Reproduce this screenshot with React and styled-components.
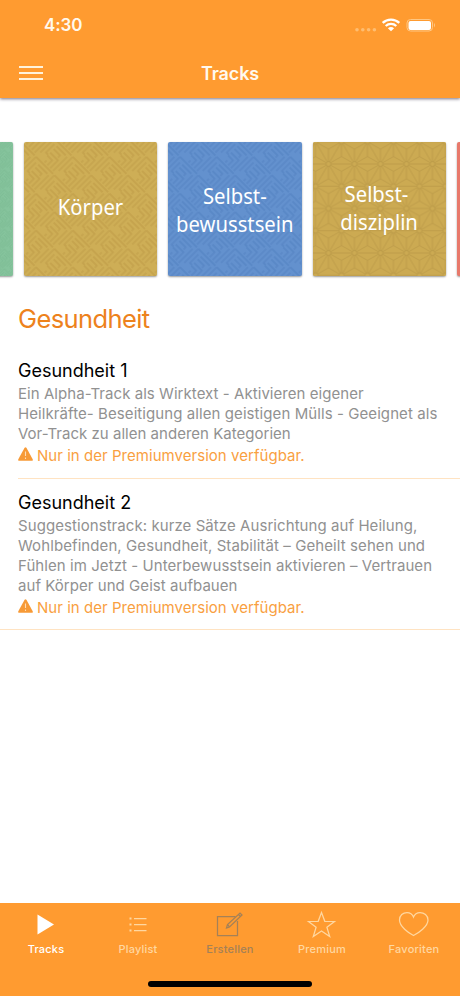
import React from 'react';
import styled, { createGlobalStyle } from 'styled-components';

const GlobalStyle = createGlobalStyle`
  * {
    box-sizing: border-box;
  }

  body {
    margin: 0;
    background: #fff;
    font-family: Inter, "Liberation Sans", sans-serif;
    -webkit-font-smoothing: antialiased;
  }
`;

const Screen = styled.div`
  display: flex;
  flex-direction: column;
  width: 460px;
  height: 996px;
  overflow: hidden;
  background: #fff;
`;

const Header = styled.header`
  height: 98px;
  flex: none;
  color: #fff9ee;
  background: #ff9b30;
  box-shadow: 0 1px 3px rgba(50, 40, 70, 0.65);
`;

const StatusBar = styled.div`
  display: flex;
  align-items: center;
  justify-content: space-between;
  height: 50px;
  padding: 0 24px 0 44px;
`;

const Clock = styled.span`
  font-size: 17px;
  font-weight: 600;
  letter-spacing: -0.1px;
`;

const StatusIcons = styled.svg`
  display: block;
  width: 82px;
  height: 16px;
`;

const TitleBar = styled.div`
  display: grid;
  grid-template-columns: 62px 1fr 62px;
  align-items: center;
  height: 46px;
  padding-left: 19px;
  padding-right: 19px;
`;

const MenuButton = styled.button`
  display: flex;
  flex-direction: column;
  gap: 4px;
  width: 24px;
  padding: 0;
  border: 0;
  background: none;
`;

const MenuLine = styled.span`
  height: 2px;
  background: #fff3dc;
`;

const Title = styled.h1`
  margin: 0;
  font-size: 18px;
  font-weight: 600;
  letter-spacing: -0.1px;
  text-align: center;
`;

const Carousel = styled.div`
  display: flex;
  justify-content: center;
  flex: none;
  gap: 11px;
  height: 134px;
  margin-top: 44px;
  margin-left: 10px;
`;

const Tile = styled.div`
  display: grid;
  flex: none;
  width: 133.5px;
  height: 134px;
  overflow: hidden;
  border-radius: 2px;
  background: ${({ $color }) => $color};
  box-shadow: 0 1px 2px rgba(0, 0, 0, 0.4);

  > * {
    grid-area: 1 / 1;
  }
`;

const Pattern = styled.svg`
  width: 100%;
  height: 134px;
`;

const TileLabel = styled.div`
  align-self: center;
  justify-self: center;
  padding-bottom: ${({ $lift }) => $lift || 0}px;
  color: #fff;
  font-family: "Noto Sans", "Open Sans", sans-serif;
  font-size: 22px;
  line-height: 28px;
  text-align: center;
  white-space: pre;
  transform: scaleX(0.92);
`;

const SectionTitle = styled.h2`
  flex: none;
  margin: 27px 0 0 18px;
  color: #ed821c;
  font-size: 25.5px;
  font-weight: 400;
  line-height: 32px;
  letter-spacing: -0.6px;
`;

const TrackList = styled.ul`
  flex: 1;
  margin: 14px 0 0;
  padding: 0;
  list-style: none;
`;

const TrackItem = styled.li`
  height: ${({ $height }) => $height}px;
  margin-left: ${({ $inset }) => $inset}px;
  padding: ${({ $top }) => $top}px 0 0 ${({ $inset }) => 18 - $inset}px;
  border-bottom: 1px solid #ffe3c2;
`;

const TrackName = styled.h3`
  margin: 0 0 1px;
  color: #000;
  font-size: 18px;
  font-weight: 400;
  line-height: 24px;
`;

const Line = styled.div`
  color: #919191;
  font-size: 15px;
  line-height: 20px;
  letter-spacing: ${({ $spacing }) => $spacing}px;
  white-space: nowrap;
`;

const Notice = styled.div`
  display: flex;
  align-items: center;
  gap: 4px;
  height: 22px;
  color: #f9a03f;
  font-size: 15px;
  letter-spacing: 0.04px;
`;

const WarningIcon = styled.svg`
  width: 15px;
  height: 14px;
  margin-top: -3px;
`;

const TabBar = styled.nav`
  flex: none;
  height: 93px;
  background: #ff9b30;
`;

const Tabs = styled.div`
  display: grid;
  grid-template-columns: repeat(5, 1fr);
  height: 78px;
`;

const Tab = styled.div`
  display: flex;
  flex-direction: column;
  align-items: center;
  padding-top: 6px;
  color: ${({ $color }) => $color};
  font-size: 11px;
  font-weight: 500;
  line-height: 14px;
  letter-spacing: 0.2px;
`;

const TabIcon = styled.svg`
  width: 32px;
  height: 30px;
  margin-bottom: 3px;
  fill: none;
  stroke: currentColor;
  stroke-width: 1.25;
`;

const HomeIndicator = styled.div`
  width: 164px;
  height: 6px;
  margin: 0 auto;
  border-radius: 3px;
  background: #000;
`;

// woven diagonal bars
const Weave = ({ id, color, size = 26 }) => (
  <Pattern>
    <defs>
      <pattern
        id={id}
        width={size}
        height={size}
        viewBox="0 0 26 26"
        patternUnits="userSpaceOnUse"
        patternTransform="rotate(45)"
      >
        <g fill="none" stroke={color} strokeWidth="1.3">
          <path d="M0 2H17M0 6H13M0 10H9V13" />
          <path d="M15 6V26M19 2V22M23 6V18H26" />
          <path d="M0 15H11V26M0 19H7V26M3 23V26M19 2H26" />
        </g>
      </pattern>
    </defs>
    <rect width="100%" height="100%" fill={`url(#${id})`} />
  </Pattern>
);

// hemp leaf lattice
const Leaves = ({ id, color }) => (
  <Pattern>
    <defs>
      <pattern id={id} x="15.500" y="22" width="26" height="44.500" viewBox="0 0 26 45" preserveAspectRatio="none" patternUnits="userSpaceOnUse">
        <g fill="none" stroke={color} strokeWidth="0.9">
          <path d="M0 0 26 45M26 0 0 45M0 0H26M0 45H26M0 22.500H26" />
          <path d="M0 0 13 7.500 26 0M13 7.500V37.500M0 45 13 37.500 26 45" />
          <path d="M0 0V15L13 22.500 26 15V0M0 45V30L13 22.500 26 30V45" />
        </g>
        <g fill="#ccaa52" stroke={color}>
          <circle cx="13" cy="22.500" r="2.500" />
          <circle cx="0" cy="0" r="2.500" />
          <circle cx="26" cy="0" r="2.500" />
          <circle cx="0" cy="45" r="2.500" />
          <circle cx="26" cy="45" r="2.500" />
        </g>
      </pattern>
    </defs>
    <rect width="100%" height="100%" fill={`url(#${id})`} />
  </Pattern>
);

const tracks = [
  {
    name: 'Gesundheit 1',
    height: 130,
    inset: 18,
    top: 10,
    lines: [
      { text: 'Ein Alpha-Track als Wirktext - Aktivieren eigener', spacing: 0.05 },
      { text: 'Heilkräfte- Beseitigung allen geistigen Mülls - Geeignet als', spacing: 0.08 },
      { text: 'Vor-Track zu allen anderen Kategorien', spacing: 0.02 },
    ],
  },
  {
    name: 'Gesundheit 2',
    height: 151,
    inset: 0,
    top: 12,
    lines: [
      { text: 'Suggestionstrack: kurze Sätze Ausrichtung auf Heilung,', spacing: 0.07 },
      { text: 'Wohlbefinden, Gesundheit, Stabilität – Geheilt sehen und', spacing: 0.09 },
      { text: 'Fühlen im Jetzt - Unterbewusstsein aktivieren – Vertrauen', spacing: 0.07 },
      { text: 'auf Körper und Geist aufbauen', spacing: 0.05 },
    ],
  },
];

const tabs = [
  { label: 'Tracks', color: '#fff', icon: <path d="M7.500 5.500V25.500L24 15.500Z" fill="currentColor" stroke="none" /> },
  {
    label: 'Playlist',
    color: '#ffd7a0',
    icon: (
      <>
        <path d="M12 9.500H24.500M12 15.500H24.500M12 21.500H24.500" />
        <path d="M7.500 9.500h2M7.500 15.500h2M7.500 21.500h2" strokeWidth="2" />
      </>
    ),
  },
  {
    label: 'Erstellen',
    color: '#a58157',
    icon: (
      <>
        <path d="M21.500 7.500H3.500V26.500H23.500V12" />
        <path d="M12.500 19 13.500 15.500 26 4 28 6 15.500 18ZM13.500 15.500 15.500 18M24.500 5.500 26.500 7.500" />
      </>
    ),
  },
  {
    label: 'Premium',
    color: '#ffd7a0',
    icon: <path d="M15.500 3.500 18.800 12.300 28.500 12.500 20.900 18.300 23.700 27.500 15.500 22 7.300 27.500 10.100 18.300 2.500 12.500 12.200 12.300Z" />,
  },
  {
    label: 'Favoriten',
    color: '#ffd7a0',
    icon: <path d="M15.500 26.500C10.500 24 1.500 17.500 1.500 11C1.500 6.500 5 3.500 9 3.500C12.300 3.500 14.500 5.500 15.500 8C16.500 5.500 18.700 3.500 22 3.500C26 3.500 30 6.500 30 11C30 17.500 20.500 24 15.500 26.500Z" />,
  },
];

export default function App() {
  return (
    <Screen>
      <GlobalStyle />
      <Header>
        <StatusBar>
          <Clock>4:30</Clock>
          <StatusIcons viewBox="0 0 82 16">
            <g fill="#ffbd70">
              <circle cx="3" cy="12.800" r="1.800" />
              <circle cx="8.800" cy="12.800" r="1.800" />
              <circle cx="14.600" cy="12.800" r="1.800" />
              <circle cx="20.400" cy="12.800" r="1.800" />
            </g>
            <g fill="none" stroke="#fff" strokeWidth="2.300">
              <path d="M28.700 5.900A12 12 0 0 1 45.300 5.900" />
              <path d="M31.700 9A7.700 7.700 0 0 1 42.300 9" />
            </g>
            <path d="M33.900 11.200A4.800 4.800 0 0 1 40.100 11.200L37 14.300Z" fill="#fff" />
            <rect x="53" y="2.500" width="25.500" height="11.500" rx="3.500" fill="none" stroke="#ffc783" />
            <rect x="54.500" y="4" width="22.500" height="9" rx="2" fill="#fff" />
            <path d="M80 6V10.500Q82 8.200 80 6Z" fill="#ffc783" />
          </StatusIcons>
        </StatusBar>
        <TitleBar>
          <MenuButton aria-label="Menü">
            <MenuLine />
            <MenuLine />
            <MenuLine />
          </MenuButton>
          <Title>Tracks</Title>
        </TitleBar>
      </Header>

      <Carousel>
        <Tile $color="#86c49d">
          <Weave id="weave-green" color="#79b990" size={14} />
        </Tile>
        <Tile $color="#ceae56">
          <Weave id="weave-gold" color="#c3a14c" />
          <TileLabel $lift={6}>Körper</TileLabel>
        </Tile>
        <Tile $color="#6391ce">
          <Weave id="weave-blue" color="#5886c5" />
          <TileLabel $lift={1}>{'Selbst-\nbewusstsein'}</TileLabel>
        </Tile>
        <Tile $color="#ccaa52">
          <Leaves id="leaves-gold" color="#bc9b48" />
          <TileLabel $lift={5}>{'Selbst- \ndisziplin'}</TileLabel>
        </Tile>
        <Tile $color="#e8796b" />
      </Carousel>

      <SectionTitle>Gesundheit</SectionTitle>
      <TrackList>
        {tracks.map(track => (
          <TrackItem key={track.name} $height={track.height} $inset={track.inset} $top={track.top}>
            <TrackName>{track.name}</TrackName>
            {track.lines.map(line => (
              <Line key={line.text} $spacing={line.spacing}>{line.text}</Line>
            ))}
            <Notice>
              <WarningIcon viewBox="0 0 15 14">
                <path d="M6.600 0.800Q7.500 -0.500 8.400 0.800L14.700 12.200Q15.200 13.800 13.800 13.800H1.200Q-0.200 13.800 0.300 12.200Z" fill="#f79a36" />
                <path d="M7.500 4.500V9M7.500 10.500V12" stroke="#ffdcb5" strokeWidth="1.100" />
              </WarningIcon>
              Nur in der Premiumversion verfügbar.
            </Notice>
          </TrackItem>
        ))}
      </TrackList>

      <TabBar>
        <Tabs>
          {tabs.map(tab => (
            <Tab key={tab.label} $color={tab.color}>
              <TabIcon viewBox="0 0 32 30">{tab.icon}</TabIcon>
              {tab.label}
            </Tab>
          ))}
        </Tabs>
        <HomeIndicator />
      </TabBar>
    </Screen>
  );
}
